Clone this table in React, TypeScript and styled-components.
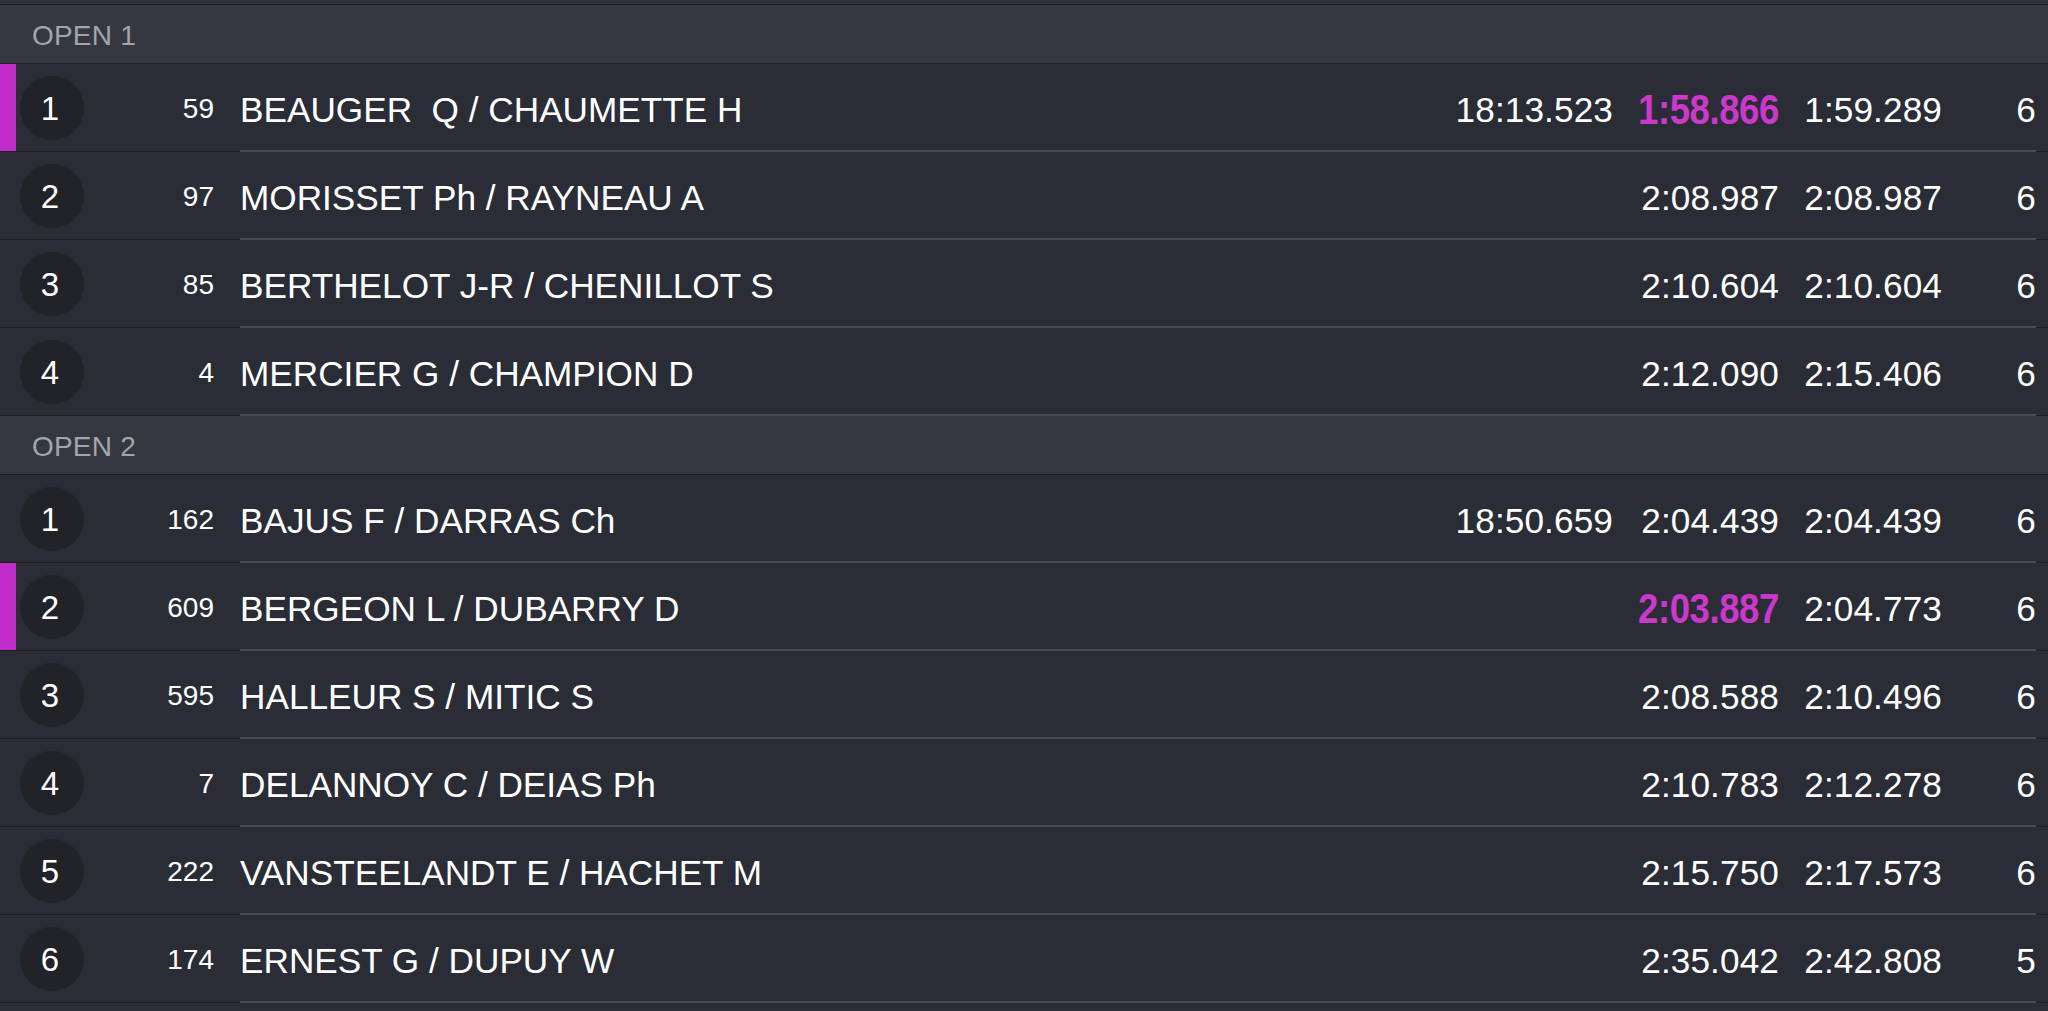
import React from 'react';
import styled, { createGlobalStyle } from 'styled-components';

const GlobalStyle = createGlobalStyle`
    html, body {
        margin: 0;
        padding: 0;
        background: #2a2d36;
        overflow: hidden;
    }
    body {
        font-family: "Liberation Sans", Arial, sans-serif;
        color: #fff;
    }
`;

const Board = styled.div`
    width: 2048px;
    display: flex;
    flex-direction: column;
`;

const TopStrip = styled.div`
    height: 4px;
    background: #2e3139;
    border-bottom: 1px solid #1c1e23;
`;

const GroupHeader = styled.div`
    height: 59px;
    display: flex;
    align-items: center;
    padding: 4px 0 0 32px;
    box-sizing: border-box;
    background: #353841;
    border-bottom: 1px solid #1c1e23;
    color: #a2a5ab;
    font-size: 28px;
    letter-spacing: 0.2px;
`;

const Row = styled.div`
    height: 88px;
    display: flex;
`;

const Lead = styled.div`
    width: 240px;
    display: flex;
    align-items: center;
    border-bottom: 1px solid #1c1e23;
    box-sizing: border-box;
`;

const Marker = styled.div<{ $on: boolean }>`
    width: 16px;
    align-self: stretch;
    background: ${(p) => (p.$on ? '#c22dc9' : 'transparent')};
`;

const Position = styled.div`
    width: 64px;
    height: 64px;
    margin-left: 4px;
    border-radius: 50%;
    background: #212329;
    display: flex;
    align-items: center;
    justify-content: center;
    box-sizing: border-box;
    padding: 3px 4px 0 0;
    font-size: 33px;
`;

const CarNumber = styled.div`
    width: 130px;
    text-align: right;
    font-size: 28px;
    padding-top: 3px;
`;

const Main = styled.div`
    width: 1796px;
    display: grid;
    grid-template-columns: 1fr 170px 166px 163px 94px;
    align-items: center;
    border-bottom: 2px solid #474a53;
    box-sizing: border-box;
    font-size: 35.2px;
`;

const Tail = styled.div`
    flex: 1;
    border-bottom: 1px solid #1c1e23;
`;

const Name = styled.div`
    white-space: pre;
    padding-top: 5px;
`;

const Cell = styled.div`
    text-align: right;
    padding-top: 5px;
    letter-spacing: 0.1px;
`;

const Best = styled.span`
    display: inline-block;
    font-size: 42px;
    font-weight: bold;
    color: #cc38cc;
    transform: scaleX(0.87);
    transform-origin: right center;
    letter-spacing: -0.5px;
`;

type Entry = {
    pos: number;
    num: number;
    name: string;
    total?: string;
    best: string;
    last: string;
    laps: number;
    fastest?: boolean;
};

const groups: { title: string; rows: Entry[] }[] = [
    {
        title: 'OPEN 1',
        rows: [
            { pos: 1, num: 59, name: 'BEAUGER  Q / CHAUMETTE H', total: '18:13.523', best: '1:58.866', last: '1:59.289', laps: 6, fastest: true },
            { pos: 2, num: 97, name: 'MORISSET Ph / RAYNEAU A', best: '2:08.987', last: '2:08.987', laps: 6 },
            { pos: 3, num: 85, name: 'BERTHELOT J-R / CHENILLOT S', best: '2:10.604', last: '2:10.604', laps: 6 },
            { pos: 4, num: 4, name: 'MERCIER G / CHAMPION D', best: '2:12.090', last: '2:15.406', laps: 6 },
        ],
    },
    {
        title: 'OPEN 2',
        rows: [
            { pos: 1, num: 162, name: 'BAJUS F / DARRAS Ch', total: '18:50.659', best: '2:04.439', last: '2:04.439', laps: 6 },
            { pos: 2, num: 609, name: 'BERGEON L / DUBARRY D', best: '2:03.887', last: '2:04.773', laps: 6, fastest: true },
            { pos: 3, num: 595, name: 'HALLEUR S / MITIC S', best: '2:08.588', last: '2:10.496', laps: 6 },
            { pos: 4, num: 7, name: 'DELANNOY C / DEIAS Ph', best: '2:10.783', last: '2:12.278', laps: 6 },
            { pos: 5, num: 222, name: 'VANSTEELANDT E / HACHET M', best: '2:15.750', last: '2:17.573', laps: 6 },
            { pos: 6, num: 174, name: 'ERNEST G / DUPUY W', best: '2:35.042', last: '2:42.808', laps: 5 },
        ],
    },
];

const App: React.FC = () => {
    return (
        <>
            <GlobalStyle />
            <Board>
                <TopStrip />
                {groups.map((g) => (
                    <React.Fragment key={g.title}>
                        <GroupHeader>{g.title}</GroupHeader>
                        {g.rows.map((r) => (
                            <Row key={r.num}>
                                <Lead>
                                    <Marker $on={!!r.fastest} />
                                    <Position>{r.pos}</Position>
                                    <CarNumber>{r.num}</CarNumber>
                                </Lead>
                                <Main>
                                    <Name>{r.name}</Name>
                                    <Cell>{r.total ?? ''}</Cell>
                                    <Cell>{r.fastest ? <Best>{r.best}</Best> : r.best}</Cell>
                                    <Cell>{r.last}</Cell>
                                    <Cell>{r.laps}</Cell>
                                </Main>
                                <Tail />
                            </Row>
                        ))}
                    </React.Fragment>
                ))}
            </Board>
        </>
    );
};

export default App;
